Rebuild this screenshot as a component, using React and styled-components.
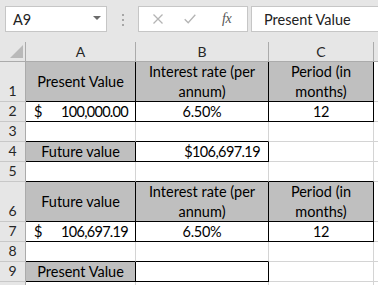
import React from "react";
import styled, { createGlobalStyle } from "styled-components";

const GRID = "#d4d4d4";
const BLACK = "#000000";
const FILL = "#bfbfbf";
const CHROME = "#e6e6e6";
const HEAD_LINE = "#ababab";
const FONT = `"Lato", "Liberation Sans", sans-serif`;

const GlobalStyle = createGlobalStyle`
  html, body { margin: 0; padding: 0; background: #ffffff; }
  body { font-family: ${FONT}; overflow: hidden; }
  * { box-sizing: border-box; }
`;

const Page = styled.div`
  width: 378px;
  height: 285px;
  overflow: hidden;
  background: #ffffff;
`;

const Toolbar = styled.div`
  height: 42px;
  background: ${CHROME};
  display: flex;
  align-items: flex-start;
  padding: 6px 0 0 5px;
`;

const NameBox = styled.div`
  width: 102px;
  height: 26px;
  background: #ffffff;
  border: 1px solid #c6c6c6;
  display: flex;
  align-items: center;
  justify-content: space-between;
  padding: 0 5px 0 7px;
  font-size: 14.5px;
  color: #222;
`;

const Caret = styled.span`
  width: 0;
  height: 0;
  border-left: 4px solid transparent;
  border-right: 4px solid transparent;
  border-top: 4px solid #6b6b6b;
  margin-top: -3px;
`;

const Dots = styled.div`
  width: 31px;
  display: flex;
  flex-direction: column;
  align-items: center;
  gap: 3px;
  padding-top: 8px;
`;

const Dot = styled.span`
  width: 2px;
  height: 2px;
  background: #a6a6a6;
`;

const FxBox = styled.div`
  width: 110px;
  height: 26px;
  background: #ffffff;
  border: 1px solid #c6c6c6;
  display: flex;
  align-items: center;
  padding-left: 14px;
  gap: 21px;
`;

const FxLabel = styled.span`
  margin-left: 5px;
  font-family: "Liberation Serif", serif;
  font-style: italic;
  font-size: 14px;
  color: #555;
  letter-spacing: -0.5px;
`;

const FormulaInput = styled.div`
  flex: 1;
  height: 26px;
  margin-left: 3px;
  background: #ffffff;
  border: 1px solid #c6c6c6;
  border-right: none;
  display: flex;
  align-items: center;
  padding-left: 12px;
  font-size: 14.5px;
  color: #222;
  white-space: nowrap;
`;

const Sheet = styled.div`
  display: grid;
  grid-template-columns: 26px 110px 133px 105px 1fr;
  font-size: 14.5px;
  color: #000;
`;

const Corner = styled.div`
  height: 20px;
  background: ${CHROME};
  border-right: 1px solid ${HEAD_LINE};
  border-bottom: 1px solid ${HEAD_LINE};
  display: flex;
  align-items: flex-end;
  justify-content: flex-end;
  padding: 0 2px 3px 0;
`;

const ColHead = styled.div`
  height: 20px;
  background: ${CHROME};
  border-right: 1px solid ${HEAD_LINE};
  border-bottom: 1px solid ${HEAD_LINE};
  display: flex;
  align-items: center;
  justify-content: center;
  color: #262626;
  font-size: 14px;
`;

const RowHead = styled.div`
  height: ${(p) => p.$h}px;
  background: ${CHROME};
  border-right: 1px solid ${HEAD_LINE};
  border-bottom: 1px solid #c8c8c8;
  display: flex;
  align-items: flex-end;
  justify-content: center;
  padding-bottom: 1px;
  color: #262626;
  font-size: 14px;
  line-height: 18px;
`;

const Cell = styled.div`
  height: ${(p) => p.$h}px;
  background: ${(p) => p.$fill || "#ffffff"};
  border-right: 1px solid ${(p) => p.$r || GRID};
  border-bottom: 1px solid ${(p) => p.$b || GRID};
  display: flex;
  align-items: center;
  justify-content: ${(p) => p.$align || "center"};
  padding: 0 ${(p) => p.$pr ?? 2}px 0 ${(p) => p.$pl ?? 2}px;
  text-align: center;
  line-height: 20px;
  white-space: nowrap;
  overflow: visible;
`;

const Num = styled.span`
  letter-spacing: ${(p) => p.$ls ?? -0.7}px;
`;

const Lines = styled.div`
  display: flex;
  flex-direction: column;
  align-items: center;
`;

const B = { r: BLACK, b: BLACK };

const rows = [
  {
    n: "1",
    h: 40,
    cells: [
      { ...B, fill: FILL, lines: ["Present Value"] },
      { ...B, fill: FILL, lines: ["Interest rate (per", "annum)"] },
      { ...B, fill: FILL, lines: ["Period (in", "months)"] },
      {},
    ],
  },
  {
    n: "2",
    h: 20,
    cells: [
      { ...B, acct: ["$", "100,000.00"] },
      { ...B, num: "6.50%" },
      { ...B, num: "12" },
      {},
    ],
  },
  { n: "3", h: 20, cells: [{ b: BLACK }, { b: BLACK }, {}, {}] },
  {
    n: "4",
    h: 20,
    cells: [
      { ...B, fill: FILL, lines: ["Future value"] },
      { ...B, right: "$106,697.19" },
      {},
      {},
    ],
  },
  { n: "5", h: 20, cells: [{ b: BLACK }, { b: BLACK }, { b: BLACK }, {}] },
  {
    n: "6",
    h: 40,
    cells: [
      { ...B, fill: FILL, lines: ["Future value"] },
      { ...B, fill: FILL, lines: ["Interest rate (per", "annum)"] },
      { ...B, fill: FILL, lines: ["Period (in", "months)"] },
      {},
    ],
  },
  {
    n: "7",
    h: 20,
    cells: [
      { ...B, acct: ["$", "106,697.19"] },
      { ...B, num: "6.50%" },
      { ...B, num: "12" },
      {},
    ],
  },
  { n: "8", h: 20, cells: [{ b: BLACK }, { b: BLACK }, {}, {}] },
  {
    n: "9",
    h: 20,
    cells: [{ ...B, fill: FILL, lines: ["Present Value"] }, { ...B }, {}, {}],
  },
  { n: "", h: 20, cells: [{}, {}, {}, {}] },
];

function renderCell(c, h, key) {
  if (c.acct) {
    return (
      <Cell key={key} $h={h} $r={c.r} $b={c.b} $fill={c.fill} $align="space-between" $pl={8} $pr={7}>
        <span>{c.acct[0]}</span>
        <Num>{c.acct[1]}</Num>
      </Cell>
    );
  }
  if (c.right) {
    return (
      <Cell key={key} $h={h} $r={c.r} $b={c.b} $fill={c.fill} $align="flex-end" $pr={8}>
        <Num $ls={-0.6}>{c.right}</Num>
      </Cell>
    );
  }
  if (c.num) {
    return (
      <Cell key={key} $h={h} $r={c.r} $b={c.b} $fill={c.fill}>
        <Num $ls={-0.3}>{c.num}</Num>
      </Cell>
    );
  }
  return (
    <Cell key={key} $h={h} $r={c.r} $b={c.b} $fill={c.fill}>
      {c.lines && (
        <Lines>
          {c.lines.map((l, i) => (
            <span key={i}>{l}</span>
          ))}
        </Lines>
      )}
    </Cell>
  );
}

export default function App() {
  return (
    <Page>
      <GlobalStyle />
      <Toolbar>
        <NameBox>
          <span>A9</span>
          <Caret />
        </NameBox>
        <Dots>
          <Dot />
          <Dot />
          <Dot />
        </Dots>
        <FxBox>
          <svg width="10" height="10" viewBox="0 0 10 10">
            <path d="M0.5 0.5 L9.5 9.5 M9.5 0.5 L0.5 9.5" stroke="#b4b4b4" strokeWidth="1.3" fill="none" />
          </svg>
          <svg width="12" height="10" viewBox="0 0 12 10">
            <path d="M0.7 5.2 L4.2 8.8 L11.3 0.8" stroke="#b4b4b4" strokeWidth="1.3" fill="none" />
          </svg>
          <FxLabel>fx</FxLabel>
        </FxBox>
        <FormulaInput>Present Value</FormulaInput>
      </Toolbar>
      <Sheet>
        <Corner>
          <svg width="13" height="13" viewBox="0 0 13 13">
            <polygon points="13,0 13,13 0,13" fill="#b9b9b9" />
          </svg>
        </Corner>
        <ColHead>A</ColHead>
        <ColHead>B</ColHead>
        <ColHead>C</ColHead>
        <ColHead />
        {rows.map((row, ri) => (
          <React.Fragment key={ri}>
            <RowHead $h={row.h}>{row.n}</RowHead>
            {row.cells.map((c, i) => renderCell(c, row.h, ri + "-" + i))}
          </React.Fragment>
        ))}
      </Sheet>
    </Page>
  );
}
